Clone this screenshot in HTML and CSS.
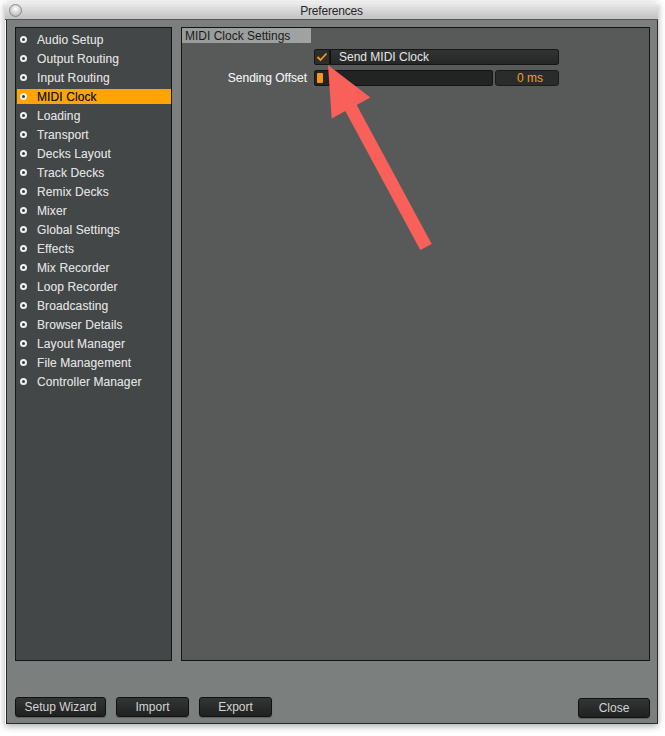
FILE: index.html
```html
<!DOCTYPE html>
<html>
<head>
<meta charset="utf-8">
<title>Preferences</title>
<link rel="stylesheet" href="styles.css">
</head>
<body>
<div class="window">
  <div class="titlebar">
    <span class="closedot"></span>
    <span class="title">Preferences</span>
  </div>
  <div class="content">
    <div class="panels">
      <ul class="sidebar">
        <li class="item"><span class="dot"></span>Audio Setup</li>
        <li class="item"><span class="dot"></span>Output Routing</li>
        <li class="item"><span class="dot"></span>Input Routing</li>
        <li class="item active"><span class="dot"></span>MIDI Clock</li>
        <li class="item"><span class="dot"></span>Loading</li>
        <li class="item"><span class="dot"></span>Transport</li>
        <li class="item"><span class="dot"></span>Decks Layout</li>
        <li class="item"><span class="dot"></span>Track Decks</li>
        <li class="item"><span class="dot"></span>Remix Decks</li>
        <li class="item"><span class="dot"></span>Mixer</li>
        <li class="item"><span class="dot"></span>Global Settings</li>
        <li class="item"><span class="dot"></span>Effects</li>
        <li class="item"><span class="dot"></span>Mix Recorder</li>
        <li class="item"><span class="dot"></span>Loop Recorder</li>
        <li class="item"><span class="dot"></span>Broadcasting</li>
        <li class="item"><span class="dot"></span>Browser Details</li>
        <li class="item"><span class="dot"></span>Layout Manager</li>
        <li class="item"><span class="dot"></span>File Management</li>
        <li class="item"><span class="dot"></span>Controller Manager</li>
      </ul>
      <div class="main">
        <div class="section-tab">MIDI Clock Settings</div>
        <div class="row first">
          <div class="label"></div>
          <div class="checkbox">
            <svg width="12" height="10" viewBox="0 0 12 10"><path d="M1.5 5 L4.5 8 L10.5 1.5" fill="none" stroke="#f39a1c" stroke-width="1.8"/></svg>
          </div>
          <div class="toggle">Send MIDI Clock</div>
        </div>
        <div class="row">
          <div class="label">Sending Offset</div>
          <div class="slider"><span class="handle"></span></div>
          <div class="value">0 ms</div>
        </div>
      </div>
    </div>
    <div class="bottombar">
      <button class="btn wide">Setup Wizard</button>
      <button class="btn">Import</button>
      <button class="btn">Export</button>
      <span class="spacer"></span>
      <button class="btn close">Close</button>
    </div>
  </div>
</div>
<svg class="arrow" width="665" height="736" viewBox="0 0 665 736">
  <polygon points="328,65 370.3,97.6 356.7,104.9 431.7,243.9 420.3,250.1 345.3,111.1 331.7,118.4" fill="#f9605a"/>
</svg>
</body>
</html>
```
FILE: styles.css
```css
* { box-sizing: border-box; }
body {
  margin: 0;
  background: #ffffff;
  font-family: "Liberation Sans", Arial, sans-serif;
  font-size: 12px;
  width: 665px;
  height: 736px;
  overflow: hidden;
}
.window {
  margin: 2px 0 0 5px;
  width: 653px;
  box-shadow: 0 2px 7px rgba(0,0,0,0.35);
}
.titlebar {
  height: 18px;
  background: linear-gradient(#eeeeee, #d6d6d6 50%, #c2c2c2);
  border-bottom: 1px solid #565656;
  display: flex;
  align-items: center;
  justify-content: center;
  position: relative;
  border-radius: 4px 4px 0 0;
}
.closedot {
  position: absolute;
  left: 4px;
  top: 2px;
  width: 13px;
  height: 13px;
  border-radius: 50%;
  background: radial-gradient(circle at 50% 35%, #ffffff, #d8d8d8 45%, #a8a8a8);
  border: 1px solid #8a8a8a;
}
.title {
  font-size: 12px;
  color: #262626;
  letter-spacing: -0.2px;
}
.content {
  background: #7b807f;
  border: 1px solid #2a2a2a;
  border-top: none;
  margin-left: 1px;
  padding: 7px 6px 6px 8px;
}
.panels {
  display: flex;
  gap: 9px;
  height: 634px;
}
.sidebar {
  list-style: none;
  margin: 0;
  padding: 4px 0 0 1px;
  width: 157px;
  background: #434748;
  border: 1px solid #151515;
  display: flex;
  flex-direction: column;
  gap: 4px;
}
.item {
  height: 15px;
  display: flex;
  align-items: center;
  padding-left: 3px;
  color: #dedede;
  white-space: nowrap;
  letter-spacing: 0.1px;
  text-shadow: 0 0 0.4px rgba(222,222,222,0.6);
}
.item.active {
  background: #ffa400;
  color: #141414;
  text-shadow: 0 0 0.4px rgba(20,20,20,0.6);
}
.dot {
  width: 7px;
  height: 7px;
  border-radius: 50%;
  border: 2px solid #f0f0f0;
  background: #3a3a3a;
  margin-right: 10px;
  flex: none;
}
.main {
  width: 469px;
  background: #585a59;
  border: 1px solid #151515;
}
.section-tab {
  width: 129px;
  height: 15px;
  background: linear-gradient(90deg, #979c9b, #9fa4a3);
  color: #1a1a1a;
  line-height: 16px;
  padding-left: 3px;
  white-space: nowrap;
}
.row {
  display: flex;
  height: 16px;
  margin-top: 5px;
}
.row.first { margin-top: 6px; }
.label {
  width: 125px;
  margin-right: 7px;
  text-align: right;
  color: #ececec;
  line-height: 16px;
  white-space: nowrap;
  text-shadow: 0 0 0.4px rgba(236,236,236,0.6);
}
.checkbox {
  width: 16px;
  height: 16px;
  background: #2c2e2e;
  border: 1px solid #161616;
  border-radius: 2px 0 0 2px;
  display: flex;
  align-items: center;
  justify-content: center;
}
.toggle {
  width: 229px;
  height: 16px;
  background: linear-gradient(#323434, #252727);
  border: 1px solid #161616;
  border-left: 1px solid #0e0e0e;
  border-radius: 0 3px 3px 0;
  color: #e6e6e6;
  line-height: 14px;
  padding-left: 8px;
}
.slider {
  width: 179px;
  height: 16px;
  background: #222424;
  border: 1px solid #141414;
  border-radius: 2px;
  padding: 2px 0 0 2px;
}
.handle {
  display: block;
  width: 6px;
  height: 10px;
  background: #f5951a;
  border-radius: 1px;
}
.value {
  margin-left: 2px;
  width: 64px;
  height: 16px;
  background: #2a2c2c;
  border: 1px solid #1a1a1a;
  border-radius: 3px;
  color: #f0a01e;
  text-align: right;
  padding-right: 15px;
  line-height: 14px;
}
.bottombar {
  display: flex;
  gap: 10px;
  margin-top: 36px;
  height: 20px;
}
.spacer { flex: 1; }
.btn {
  font-family: "Liberation Sans", Arial, sans-serif;
  font-size: 12px;
  width: 73px;
  height: 20px;
  padding: 0;
  background: linear-gradient(#343636, #1f2121);
  border: 1px solid #111111;
  border-radius: 3px;
  color: #d4d4d4;
  box-shadow: 0 1px 1px rgba(0,0,0,0.25);
}
.btn.wide { width: 91px; }
.btn.close { width: 72px; margin-top: 1px; margin-right: 1px; }
.arrow {
  position: absolute;
  left: 0;
  top: 0;
  pointer-events: none;
}
```
